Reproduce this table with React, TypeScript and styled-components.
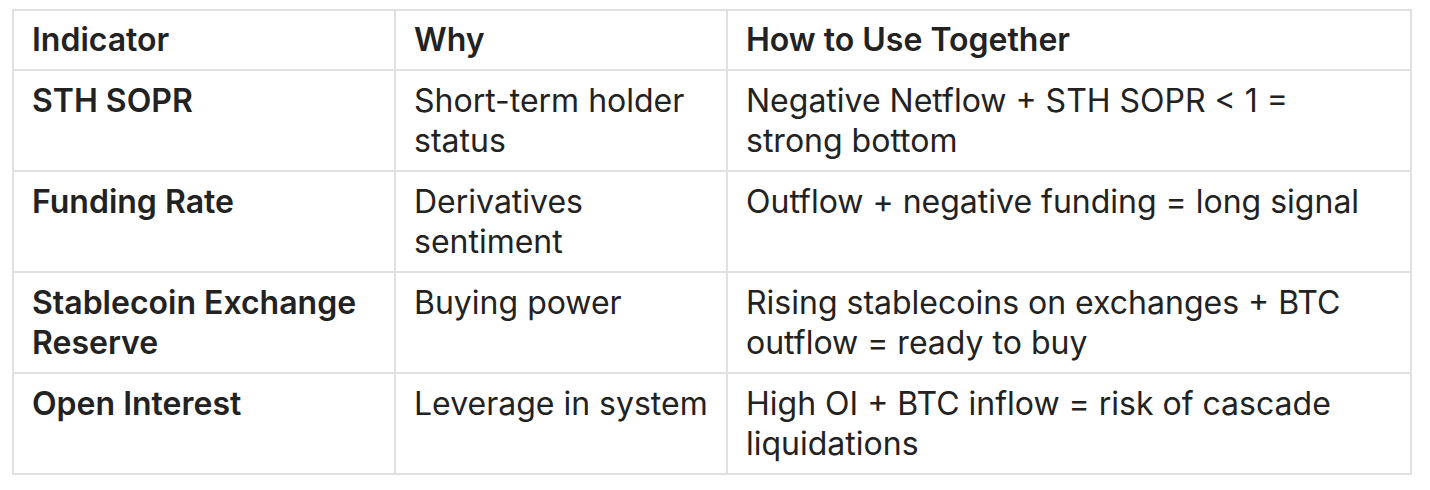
import styled, { createGlobalStyle } from 'styled-components';

interface Row {
  indicator: string;
  why: string;
  how: string;
}

const rows: Row[] = [
  {
    indicator: 'STH SOPR',
    why: 'Short-term holder status',
    how: 'Negative Netflow + STH SOPR < 1 = strong bottom',
  },
  {
    indicator: 'Funding Rate',
    why: 'Derivatives sentiment',
    how: 'Outflow + negative funding = long signal',
  },
  {
    indicator: 'Stablecoin Exchange Reserve',
    why: 'Buying power',
    how: 'Rising stablecoins on exchanges + BTC outflow = ready to buy',
  },
  {
    indicator: 'Open Interest',
    why: 'Leverage in system',
    how: 'High OI + BTC inflow = risk of cascade liquidations',
  },
];

function App() {
  return (
    <>
      <GlobalStyle />
      <Page>
        <Table>
          <colgroup>
            <col style={{ width: 382 }} />
            <col style={{ width: 332 }} />
            <col />
          </colgroup>
          <thead>
            <tr>
              <HeadCell>Indicator</HeadCell>
              <HeadCell>Why</HeadCell>
              <HeadCell>How to Use Together</HeadCell>
            </tr>
          </thead>
          <tbody>
            {rows.map((row) => (
              <tr key={row.indicator}>
                <Cell $bold>{row.indicator}</Cell>
                <Cell>{row.why}</Cell>
                <Cell>{row.how}</Cell>
              </tr>
            ))}
          </tbody>
        </Table>
      </Page>
    </>
  );
}

const GlobalStyle = createGlobalStyle`
  body {
    margin: 0;
    background: #ffffff;
    font-family: 'Inter', 'Noto Sans', sans-serif;
  }
`;

const Page = styled.div`
  padding: 9px 18px 0 12px;
`;

const Table = styled.table`
  width: 1400px;
  border-collapse: collapse;
  table-layout: fixed;
  color: #222222;
`;

const HeadCell = styled.th`
  text-align: left;
  vertical-align: top;
  font-size: 32px;
  line-height: 40px;
  font-weight: 600;
  padding: 9px 18px 9px 18px;
  border: 2px solid #e1e1e1;
`;

const Cell = styled.td<{ $bold?: boolean }>`
  vertical-align: top;
  font-size: 32px;
  line-height: 40px;
  font-weight: ${(p) => (p.$bold ? 600 : 400)};
  padding: 10px 18px 9px 18px;
  border: 2px solid #e1e1e1;

  &:last-child {
    padding-right: 26px;
  }
`;

export default App;
